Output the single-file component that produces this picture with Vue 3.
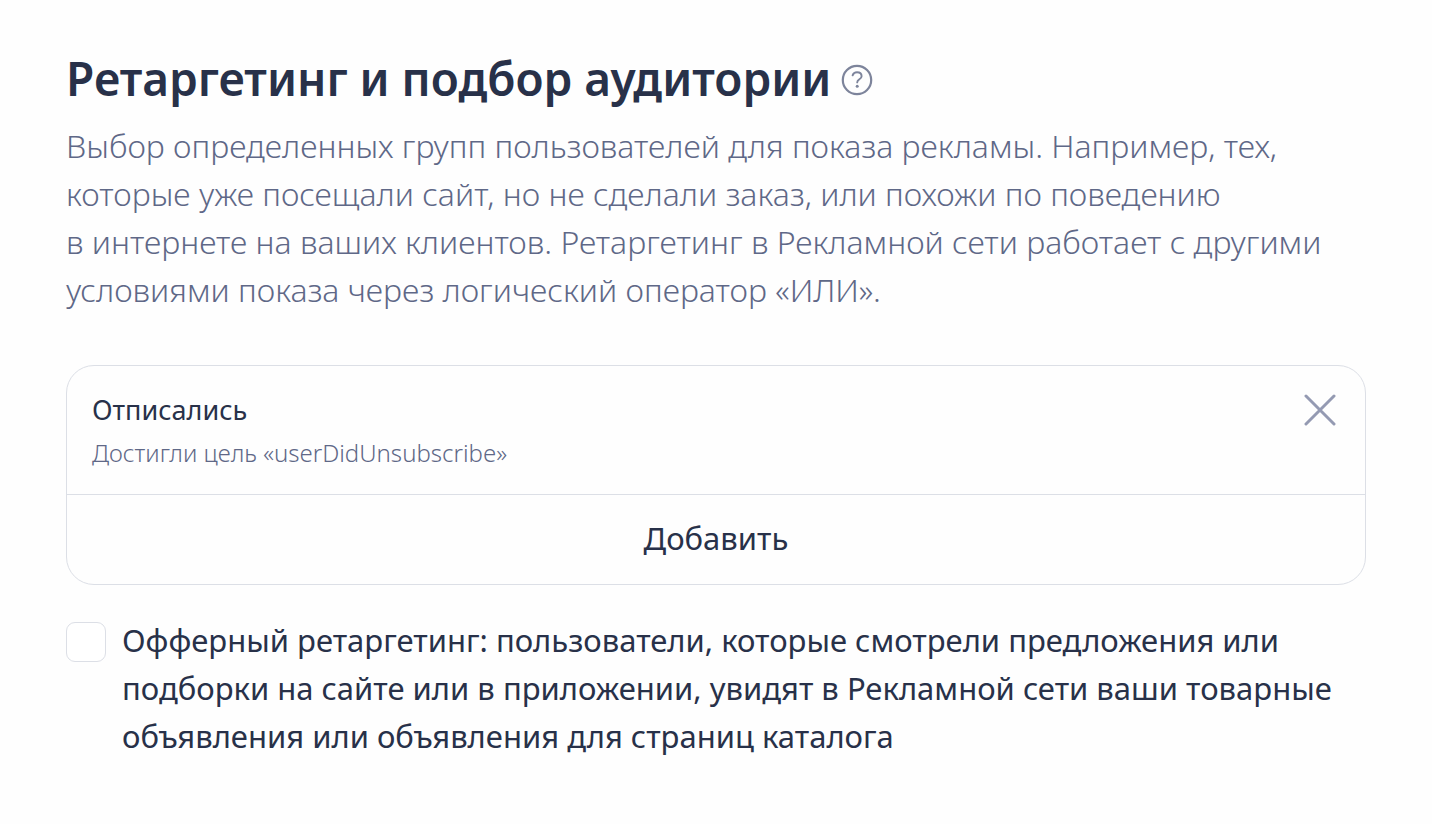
<script setup>
import { ref } from 'vue'
const audiences = ref([{ id: 1, name: 'Отписались', rule: 'Достигли цель «userDidUnsubscribe»' }])
const offer = ref(false)
</script>

<template>
  <main class="panel">
    <header class="head">
      <h1>Ретаргетинг и подбор аудитории</h1>
      <button class="icon-btn help" type="button" aria-label="Справка">
        <svg width="32" height="32" viewBox="0 0 32 32" fill="none" stroke="#7d849b" stroke-width="2.2" stroke-linecap="round">
          <circle cx="16" cy="16" r="14.2" />
          <path stroke-width="1.9" d="M11.6 11.3c.7-1.9 2.3-3 4.4-3 2.6 0 4.6 1.5 4.6 3.9 0 3.300-4.400 2.900-4.400 6.200" />
          <circle cx="16.2" cy="22.300" r="1.5" fill="#7d849b" stroke="none" />
        </svg>
      </button>
    </header>
    <p class="lead">Выбор определенных групп пользователей для показа рекламы. Например, тех,<br>которые уже посещали сайт, но не сделали заказ, или похожи по поведению<br>в интернете на ваших клиентов. Ретаргетинг в Рекламной сети работает с другими<br>условиями показа через логический оператор «ИЛИ».</p>
    <section class="box">
      <div v-for="a in audiences" :key="a.id" class="item">
        <div>
          <div class="name">{{ a.name }}</div>
          <div class="rule">{{ a.rule }}</div>
        </div>
        <button class="icon-btn" type="button" aria-label="Удалить">
          <svg width="32" height="32" viewBox="0 0 32 32" fill="none" stroke="#949ab2" stroke-width="3" stroke-linecap="round">
            <path d="M2 2L30 30M30 2L2 30" />
          </svg>
        </button>
      </div>
      <button class="add" type="button">Добавить</button>
    </section>
    <label class="offer">
      <input v-model="offer" type="checkbox">
      <span>Офферный ретаргетинг: пользователи, которые смотрели предложения или<br>подборки на сайте или в приложении, увидят в Рекламной сети ваши товарные<br>объявления или объявления для страниц каталога</span>
    </label>
  </main>
</template>

<style>
body { background: #fefefe; }
</style>

<style scoped>
.panel {
  box-sizing: border-box;
  padding: 48px 66px;
  font-family: "Noto Sans", sans-serif;
  color: #283149;
}
.head { display: flex; align-items: flex-start; gap: 10px; }
h1 { margin: 0; font-size: 46px; line-height: 60px; font-weight: 600; white-space: nowrap; }
.icon-btn { display: flex; padding: 0; border: 0; background: none; cursor: pointer; }
.help { margin-top: 16px; }
.lead { margin: 14px 0 51px; font-size: 32px; font-weight: 300; line-height: 48px; color: #5f6887; white-space: nowrap; }
.box { border: 1px solid #dcdfe6; border-radius: 28px; overflow: hidden; }
.item { display: flex; justify-content: space-between; align-items: flex-start; padding: 28px 29px 23px 25px; }
.name { font-size: 27px; line-height: 32px; }
.rule { margin-top: 9px; font-size: 24px; font-weight: 300; line-height: 36px; color: #5f6887; }
.add {
  display: block;
  width: 100%;
  height: 90px;
  padding: 0 0 4px;
  border: 0;
  border-top: 1px solid #dcdfe6;
  background: none;
  color: inherit;
  font: inherit;
  font-size: 31px;
  cursor: pointer;
}
.offer { display: flex; align-items: flex-start; gap: 16px; margin-top: 31px; font-size: 31px; line-height: 48px; white-space: nowrap; }
.offer input {
  appearance: none;
  flex: none;
  box-sizing: border-box;
  width: 40px;
  height: 40px;
  margin: 6px 0 0;
  border: 1px solid #dcdfe6;
  border-radius: 9px;
  background: #fff;
}
.offer input:checked { background: #283149; }
</style>
